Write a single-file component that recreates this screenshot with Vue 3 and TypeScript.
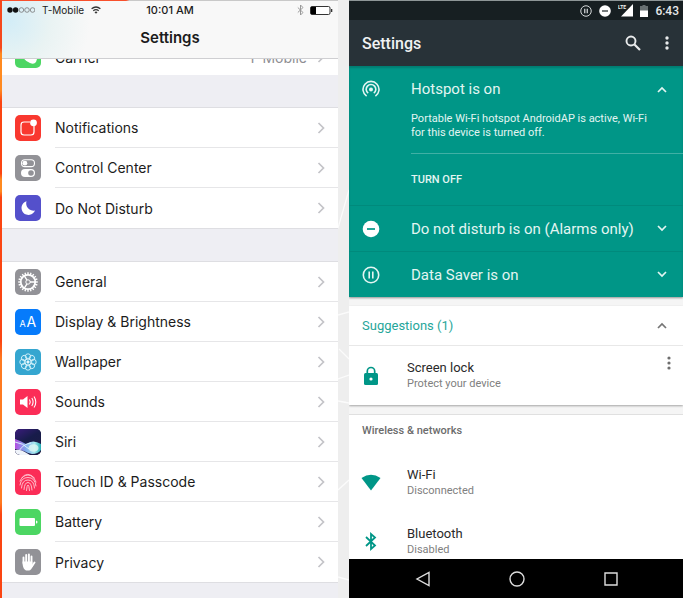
<script setup lang="ts">
import { ref } from 'vue'

interface Row {
  icon: string
  label: string
  color: string
}

const alerts: Row[] = [
  { icon: 'notifications', label: 'Notifications', color: '#f9382f' },
  { icon: 'control', label: 'Control Center', color: '#929297' },
  { icon: 'moon', label: 'Do Not Disturb', color: '#5450cb' },
]

const general: Row[] = [
  { icon: 'gear', label: 'General', color: '#929297' },
  { icon: 'display', label: 'Display & Brightness', color: '#067bfb' },
  { icon: 'wallpaper', label: 'Wallpaper', color: '#35a6d0' },
  { icon: 'sounds', label: 'Sounds', color: '#fb2d57' },
  { icon: 'siri', label: 'Siri', color: '#1b1840' },
  { icon: 'touch', label: 'Touch ID & Passcode', color: '#fb2d57' },
  { icon: 'battery', label: 'Battery', color: '#4cd663' },
  { icon: 'hand', label: 'Privacy', color: '#929297' },
]

const groups: Row[][] = [alerts, general]

const teeth = Array.from({ length: 20 }, (_, i) => i * 18)
const petals = Array.from({ length: 8 }, (_, i) => i * 45)

const hotspotOpen = ref(true)
const suggestionsOpen = ref(true)
</script>

<template>
  <main class="stage">
    <div class="edge"></div>

    <section class="ios" aria-label="iOS settings">
      <header class="ios-head">
        <div class="ios-status">
          <div class="carrier">
            <svg width="28" height="8" viewBox="0 0 28 8" aria-hidden="true">
              <circle cx="3" cy="4" r="2.7" fill="#111" />
              <circle cx="8.6" cy="4" r="2.7" fill="#111" />
              <g fill="none" stroke="#777" stroke-width=".8">
                <circle cx="14.4" cy="4" r="2.3" />
                <circle cx="20" cy="4" r="2.3" />
                <circle cx="25.6" cy="4" r="2.3" />
              </g>
            </svg>
            <span>T-Mobile</span>
            <svg class="wifi" width="10" height="8" viewBox="0 0 10 8" fill="none" stroke="#333" stroke-width="1.3" aria-hidden="true">
              <path d="M.6 2.8Q5-.8 9.400 2.800M2.300 4.700Q5 2.600 7.700 4.700" />
              <path d="M5 7.800L3.500 6.200Q5 5 6.500 6.200Z" fill="#333" stroke="none" />
            </svg>
          </div>
          <span class="time">10:01 AM</span>
          <div class="power">
            <svg width="7" height="12" viewBox="0 0 7 12" fill="none" stroke="#999" aria-hidden="true">
              <path d="M.8 3.500L6 8.500L3.500 11V1L6 3.500L.8 8.500" />
            </svg>
            <svg width="23" height="9" viewBox="0 0 23 9" aria-hidden="true">
              <rect x=".5" y=".5" width="19.500" height="8" rx="1.500" fill="#fff" stroke="#333" />
              <rect x="1" y="1" width="5" height="7" fill="#000" />
              <path d="M21 3h1.300v3H21z" fill="#333" />
            </svg>
          </div>
        </div>
        <h1>Settings</h1>
      </header>

      <div class="scrolled">
        <a href="#carrier" class="row">
          <svg class="tile" viewBox="0 0 26 26" aria-hidden="true">
            <rect width="26" height="26" rx="5" fill="#4cd663" />
            <path d="M7 5l3-1 2 5-2 2q2 4 5 5l2-2 5 3-1 3q-2 3-6 1Q6 17 5 8q0-2 2-3z" fill="#fff" />
          </svg>
          <span class="row-body"><span>Carrier</span><span class="value">T-Mobile</span>
            <svg class="chev" viewBox="0 0 8 12"><path d="M1.500 1L6.500 6L1.500 11" /></svg>
          </span>
        </a>
      </div>

      <nav v-for="(group, g) in groups" :key="g" class="group">
        <a v-for="row in group" :key="row.icon" class="row" :href="'#' + row.icon">
          <svg class="tile" viewBox="0 0 26 26" aria-hidden="true">
            <rect width="26" height="26" rx="5" :fill="row.color" />
            <g v-if="row.icon === 'notifications'">
              <path d="M15 7H9Q6 7 6 10v7q0 3 3 3h7q3 0 3-3v-6" fill="none" stroke="#fff" stroke-width="1.200" />
              <circle cx="18.500" cy="7.800" r="3.400" fill="#fff" />
            </g>
            <g v-else-if="row.icon === 'control'">
              <rect x="6.500" y="4.800" width="13" height="6.800" rx="3.400" fill="none" stroke="#fff" stroke-width="1.100" />
              <circle cx="9.900" cy="8.200" r="2.400" fill="#fff" />
              <rect x="6" y="14" width="14" height="8" rx="4" fill="#fff" />
              <circle cx="16" cy="18" r="2.800" :fill="row.color" />
            </g>
            <path v-else-if="row.icon === 'moon'" d="M11.500 6.200A7 7 0 1 0 20 15.500A7.300 7.300 0 0 1 11.500 6.200Z" fill="#fff" />
            <g v-else-if="row.icon === 'gear'" fill="none" stroke="#fff">
              <circle cx="13" cy="13" r="7.200" stroke-width="1.700" />
              <path v-for="a in teeth" :key="a" d="M13 3.200v2.600" stroke-width="1.400" :transform="`rotate(${a} 13 13)`" />
              <circle cx="13" cy="13" r="2.200" />
              <path d="M15 13h5.500M12 11.200L9 6.300M12 14.800L9 19.700" stroke-width="1.300" />
            </g>
            <g v-else-if="row.icon === 'display'" fill="#fff" font-family="Inter, sans-serif">
              <text x="4.500" y="17.500" font-size="9">A</text>
              <text x="11.500" y="17.500" font-size="14">A</text>
            </g>
            <g v-else-if="row.icon === 'wallpaper'" fill="none" stroke="#d8f3fb" stroke-width=".9">
              <circle v-for="a in petals" :key="a" cx="13" cy="7.500" r="2.700" :transform="`rotate(${a} 13 13)`" />
              <circle cx="13" cy="13" r="3.300" />
              <circle cx="13" cy="13" r="1.200" fill="#fff" />
            </g>
            <g v-else-if="row.icon === 'sounds'">
              <path d="M5 10.500h3L12.500 7v12L8 15.500H5z" fill="#fff" />
              <path d="M14.500 10.500q1.500 2.500 0 5M16.800 9q2.600 4 0 8M19 7.500q3.600 5.500 0 11" fill="none" stroke="#fff" stroke-width="1.100" />
            </g>
            <g v-else-if="row.icon === 'siri'">
              <defs>
                <linearGradient id="siri-sky" x2=".6" y2="1">
                  <stop offset="0" stop-color="#3b1c7d" />
                  <stop offset=".5" stop-color="#171c4a" />
                  <stop offset="1" stop-color="#1c1b45" />
                </linearGradient>
                <linearGradient id="siri-wave">
                  <stop offset="0" stop-color="#b34ce0" />
                  <stop offset=".4" stop-color="#7fa9ee" />
                  <stop offset=".75" stop-color="#a9e8ee" />
                  <stop offset="1" stop-color="#24aeb5" />
                </linearGradient>
                <clipPath id="siri-clip"><rect width="26" height="26" rx="5" /></clipPath>
              </defs>
              <g clip-path="url(#siri-clip)">
                <rect width="26" height="26" fill="url(#siri-sky)" />
                <path d="M0 10Q6 12 11 15Q18 10 26 15V21Q23 25 17 25Q12 24 9 22Q4 21 0 20Z" fill="url(#siri-wave)" />
                <path d="M0 13Q8 14 14 20M4 22Q8 15 16 14" fill="none" stroke="#dff6ff" stroke-width=".9" />
                <ellipse cx="18.500" cy="19" rx="5" ry="3.800" fill="#dff7f4" opacity=".8" />
                <path d="M0 21Q5 20 9 22.500L15 26H0z" fill="#eff3fa" />
              </g>
            </g>
            <g v-else-if="row.icon === 'touch'" fill="none" stroke="#ffc5d2" stroke-width=".95" stroke-linecap="round">
              <path d="M6.500 9Q12.500 1.500 19.500 9M5 12Q8 6 13 6T21 13M5 16Q6 8.500 13 8.500T21 17M6.500 19Q7 11 13 11T19.500 19M9 20.500Q9.500 13.500 13 13.500T17 21M11.500 21.500Q12 16 13 16T14.500 21.500" />
            </g>
            <g v-else-if="row.icon === 'battery'" fill="#fff">
              <rect x="4.500" y="9" width="15.500" height="8" rx="1" />
              <path d="M21 11.500q1.500 0 1.500 1.500t-1.500 1.500z" />
            </g>
            <g v-else fill="none" stroke="#fff" stroke-width="1.900" stroke-linecap="round">
              <path d="M8.500 14V8.500M11.200 13V6M13.900 13V5.500M16.500 14V7.500M16.800 17.500L19.500 13.500" />
              <path d="M7.600 12.500h9.800v3.500l1 .2Q16 21.500 14 21.500h-3Q8 20 7.600 15z" fill="#fff" stroke="none" />
            </g>
          </svg>
          <span class="row-body">
            <span>{{ row.label }}</span>
            <svg class="chev" viewBox="0 0 8 12" aria-hidden="true"><path d="M1.500 1L6.500 6L1.500 11" /></svg>
          </span>
        </a>
      </nav>
    </section>

    <svg class="gutter" viewBox="0 0 11 598" preserveAspectRatio="none" aria-hidden="true">
      <path d="M0 228L11 190M0 315L11 312M1 349L11 359M0 379L11 375M0 401L11 403M0 490L11 480M0 577L11 580" fill="none" stroke="#fbfbfb" stroke-width="1.300" />
    </svg>

    <section class="android" aria-label="Android settings">
      <div class="a-status">
        <svg width="12" height="12" viewBox="0 0 24 24" fill="none" stroke="#d5d8d9" aria-hidden="true">
          <circle cx="12" cy="12" r="10.500" stroke-width="2" />
          <path d="M9.500 7.500v9M14.500 7.500v9" stroke-width="2.500" />
        </svg>
        <svg width="12" height="12" viewBox="0 0 12 12" aria-hidden="true">
          <circle cx="6" cy="6" r="5.800" fill="#fff" />
          <path d="M3 6h6" stroke="#4a5052" stroke-width="1.500" />
        </svg>
        <svg width="15" height="13" viewBox="0 0 15 13" aria-hidden="true">
          <path d="M15 0v12.500H3z" fill="#fff" />
          <text x="0" y="5" font-size="5" font-weight="700" font-family="Roboto, sans-serif" fill="#eee">LTE</text>
        </svg>
        <svg class="cell" width="8" height="12" viewBox="0 0 8 12" aria-hidden="true">
          <path d="M2.500 0h3v1H8v5H0V1h2.500z" fill="#687072" />
          <path d="M0 5.500h8V12H0z" fill="#fff" />
        </svg>
        <span>6:43</span>
      </div>

      <header class="toolbar">
        <h2>Settings</h2>
        <button aria-label="Search">
          <svg width="16" height="16" viewBox="0 0 16 16" fill="none" stroke="#e9ebec" aria-hidden="true">
            <circle cx="6" cy="6" r="4.500" stroke-width="1.900" />
            <path d="M9.500 9.500L15 15" stroke-width="2.200" />
          </svg>
        </button>
        <button aria-label="More options">
          <svg width="4" height="14" viewBox="0 0 4 14" fill="#e9ebec" aria-hidden="true">
            <circle cx="2" cy="2" r="1.700" /><circle cx="2" cy="7" r="1.700" /><circle cx="2" cy="12" r="1.700" />
          </svg>
        </button>
      </header>

      <div class="content">
        <div class="conditions">
          <article>
            <button class="condition" :aria-expanded="hotspotOpen" @click="hotspotOpen = !hotspotOpen">
              <svg class="lead" viewBox="0 0 18 18" fill="none" stroke="#e3f5f2" stroke-width="1.600" aria-hidden="true">
                <path d="M4.600 16.100A8 8 0 1 1 13.400 16.100M6.200 13.200A4.800 4.800 0 1 1 11.800 13.200" />
                <circle cx="9" cy="9.500" r="2" fill="#e3f5f2" stroke="none" />
              </svg>
              <span>Hotspot is on</span>
              <svg class="arrow" viewBox="0 0 10 7" aria-hidden="true"><path d="M1 6L5 2L9 6" /></svg>
            </button>
            <div v-if="hotspotOpen" class="detail">
              <p>Portable Wi-Fi hotspot AndroidAP is active, Wi-Fi for this device is turned off.</p>
              <div class="actions"><button>TURN OFF</button></div>
            </div>
          </article>
          <button class="condition">
            <svg class="lead" viewBox="0 0 18 18" aria-hidden="true">
              <circle cx="9" cy="9" r="8.300" fill="#fff" />
              <path d="M5 9h8" stroke="#009687" stroke-width="1.700" />
            </svg>
            <span>Do not disturb is on (Alarms only)</span>
            <svg class="arrow" viewBox="0 0 10 7" aria-hidden="true"><path d="M1 1L5 5L9 1" /></svg>
          </button>
          <button class="condition">
            <svg class="lead" viewBox="0 0 18 18" fill="none" stroke="#e3f5f2" stroke-width="1.600" aria-hidden="true">
              <circle cx="9" cy="9" r="7.700" />
              <path d="M7.200 5.500v7M10.800 5.500v7" />
            </svg>
            <span>Data Saver is on</span>
            <svg class="arrow" viewBox="0 0 10 7" aria-hidden="true"><path d="M1 1L5 5L9 1" /></svg>
          </button>
        </div>

        <div class="card suggestions">
          <button class="suggest-head" :aria-expanded="suggestionsOpen" @click="suggestionsOpen = !suggestionsOpen">
            <span>Suggestions (1)</span>
            <svg class="arrow dark" viewBox="0 0 10 7" aria-hidden="true"><path d="M1 6L5 2L9 6" /></svg>
          </button>
          <div v-if="suggestionsOpen" class="item">
            <svg class="glyph" viewBox="0 0 22 22" aria-hidden="true">
              <rect x="4" y="8" width="14" height="12" rx="1.500" fill="#009687" />
              <path d="M7.300 8.500V6.200a3.700 3.700 0 0 1 7.400 0v2.300" fill="none" stroke="#009687" stroke-width="1.700" />
              <circle cx="11" cy="14" r="1.600" fill="#fff" />
            </svg>
            <a href="#lock" class="texts"><strong>Screen lock</strong><small>Protect your device</small></a>
            <button class="more" aria-label="Suggestion options">
              <svg width="4" height="14" viewBox="0 0 4 14" fill="#6e6e6e" aria-hidden="true">
                <circle cx="2" cy="2" r="1.600" /><circle cx="2" cy="7" r="1.600" /><circle cx="2" cy="12" r="1.600" />
              </svg>
            </button>
          </div>
        </div>

        <div class="card networks">
          <h3>Wireless &amp; networks</h3>
          <div class="item">
            <svg class="glyph" viewBox="0 0 22 22" aria-hidden="true">
              <path d="M11 18.500L1.500 6Q11-.5 20.500 6Z" fill="#009687" />
            </svg>
            <a href="#wifi" class="texts"><strong>Wi-Fi</strong><small>Disconnected</small></a>
          </div>
          <div class="item">
            <svg class="glyph" viewBox="0 0 22 22" fill="none" stroke="#009687" stroke-width="1.800" aria-hidden="true">
              <path d="M6 6L15 14.500L11 18V3L15 6.500L6 15" />
            </svg>
            <a href="#bluetooth" class="texts"><strong>Bluetooth</strong><small>Disabled</small></a>
          </div>
        </div>
      </div>

      <nav class="navbar" aria-label="System">
        <button aria-label="Back"><svg viewBox="0 0 16 16"><path d="M14 1.500v13L2 8z" /></svg></button>
        <button aria-label="Home"><svg viewBox="0 0 16 16"><circle cx="8" cy="8" r="7" /></svg></button>
        <button aria-label="Recent apps"><svg viewBox="0 0 16 16"><path d="M2 2h12v12H2z" /></svg></button>
      </nav>
    </section>
  </main>
</template>

<style>
body {
  margin: 0;
  background: #eee;
}
</style>

<style scoped>
* {
  box-sizing: border-box;
}

.stage {
  display: grid;
  grid-template-columns: 2px minmax(0, 336fr) 11px minmax(0, 334fr);
  height: 100vh;
  overflow: hidden;
  background: #eee;
}

a {
  color: inherit;
  text-decoration: none;
}

button {
  padding: 0;
  border: 0;
  background: none;
  color: inherit;
  font: inherit;
  text-align: left;
  cursor: pointer;
}

h1, h2, h3, p {
  margin: 0;
}

svg {
  flex: none;
}

.edge {
  background: linear-gradient(#f5481c 0 8%, #ff8a20 9% 15%, #fb4512 17% 29%, #ff8a20 30% 32%, #fb4512 33% 57%, #ff7a20 60% 84%, #fb4512 86%);
}

.gutter {
  width: 100%;
  height: 100%;
}

/* iOS */
.ios {
  overflow: hidden;
  background: #eeeef3;
  color: #1c1c1c;
  font-family: Inter, "Liberation Sans", sans-serif;
  font-size: 14px;
}

.ios-head {
  height: 58px;
  border-top: 1px solid #ff6a3c;
  border-image: linear-gradient(90deg, #f8502c 37%, #c9c9c9 38%) 1;
  background: radial-gradient(circle at 8px 20px, #d3edf7, #e9f3f3 40px, #f8f8f8 80px);
  box-shadow: 0 1px 0 #cfcfd2;
  position: relative;
}

.ios-status {
  display: grid;
  grid-template-columns: 1fr auto 1fr;
  align-items: center;
  height: 18px;
  padding: 0 5px;
  font-size: 10px;
}

.carrier,
.power {
  display: flex;
  align-items: center;
  gap: 6px;
}

.carrier {
  gap: 7px;
}

.power {
  justify-content: flex-end;
}

.time {
  font-size: 11px;
  font-weight: 500;
}

h1 {
  font-size: 15px;
  font-weight: 600;
  line-height: 38px;
  text-align: center;
}

.scrolled {
  display: flex;
  flex-direction: column;
  justify-content: flex-end;
  height: 17px;
  overflow: hidden;
  background: #fff;
}

.row {
  display: flex;
  flex: none;
  align-items: center;
  gap: 14px;
  height: 40px;
  padding-left: 13px;
}

.tile {
  width: 26px;
  height: 26px;
}

.row-body {
  display: flex;
  flex: 1;
  align-items: center;
  height: 40px;
  padding-right: 13px;
  border-bottom: 1px solid #e6e6e8;
}

.row:last-child .row-body {
  border-bottom: 0;
}

.scrolled .row-body {
  padding-top: 4px;
}

.value {
  margin-left: auto;
  padding-right: 10px;
  color: #8e8e93;
}

.chev {
  width: 8px;
  height: 12px;
  margin-left: auto;
  fill: none;
  stroke: #c4c4c8;
  stroke-width: 1.7;
}

.value + .chev {
  margin-left: 0;
}

.group {
  margin-top: 32px;
  border: solid #dedee2;
  border-width: 1px 0;
  background: #fff;
}

/* Android */
.android {
  display: flex;
  flex-direction: column;
  min-height: 0;
  border-top: 1px solid #8e9697;
  background: #f5f5f5;
  font-family: Roboto, sans-serif;
}

.a-status {
  display: flex;
  flex: none;
  align-items: center;
  justify-content: flex-end;
  gap: 7px;
  height: 19px;
  padding-right: 4px;
  background: #171f22;
  color: #e6e8e9;
  font-size: 12px;
  font-weight: 500;
}

.toolbar {
  display: flex;
  flex: none;
  align-items: center;
  gap: 24px;
  height: 46px;
  padding: 0 14px 0 13px;
  background: #283238;
  color: #f0f2f3;
}

.toolbar button,
.more {
  display: flex;
}

h2 {
  flex: 1;
  font-size: 16px;
  font-weight: 500;
}

.content {
  flex: 1;
  min-height: 0;
  overflow: hidden;
}

.conditions {
  background: #009687;
  box-shadow: inset 0 2px 2px #007d72, 0 1px 2px #0006;
  color: #e3f5f2;
}

.condition {
  display: flex;
  align-items: center;
  width: 100%;
  height: 46px;
  padding: 0 16px 0 13px;
  font-size: 15px;
}

.condition + .condition,
article + .condition {
  border-top: 1px solid #008a7c;
}

.condition span {
  flex: 1;
}

.lead {
  width: 18px;
  height: 18px;
  margin-right: 31px;
}

.arrow {
  width: 10px;
  height: 7px;
  fill: none;
  stroke: #e3f5f2;
  stroke-width: 1.7;
}

.arrow.dark {
  stroke: #757575;
}

.detail {
  padding-left: 62px;
  font-size: 11px;
  line-height: 14px;
}

.detail p {
  padding: 0 20px 13px 0;
}

.actions {
  display: flex;
  align-items: center;
  height: 52px;
  border-top: 1px solid #40b0a5;
  font-weight: 500;
}

.card {
  background: #fff;
}

.suggestions {
  margin-top: 9px;
  box-shadow: 0 1px 2px #0005;
}

.suggest-head {
  display: flex;
  align-items: center;
  justify-content: space-between;
  width: 100%;
  height: 40px;
  padding: 0 16px 0 13px;
  border-bottom: 1px solid #e8e8e8;
  color: #26a69a;
  font-size: 13px;
}

.item {
  display: flex;
  align-items: center;
  height: 59px;
  padding: 0 12px 0 11px;
}

.glyph {
  width: 22px;
  height: 22px;
  margin-right: 25px;
}

.texts {
  display: flex;
  flex: 1;
  flex-direction: column;
  line-height: 16px;
}

strong {
  color: #2a2a2a;
  font-size: 13px;
  font-weight: 400;
}

small {
  color: #808080;
  font-size: 11px;
}

.more {
  align-self: flex-start;
  margin-top: 10px;
}

.networks {
  margin-top: 9px;
  border-top: 1px solid #e0e0e0;
}

h3 {
  padding-left: 13px;
  color: #6c6c6c;
  font-size: 11px;
  font-weight: 500;
  line-height: 32px;
  height: 38px;
}

.navbar {
  display: flex;
  flex: none;
  align-items: center;
  justify-content: space-between;
  height: 39px;
  padding: 0 64px 0 66px;
  background: #000;
}

.navbar button {
  display: flex;
}

.navbar svg {
  width: 16px;
  height: 16px;
  fill: none;
  stroke: #ddd;
  stroke-width: 1.4;
}
</style>
